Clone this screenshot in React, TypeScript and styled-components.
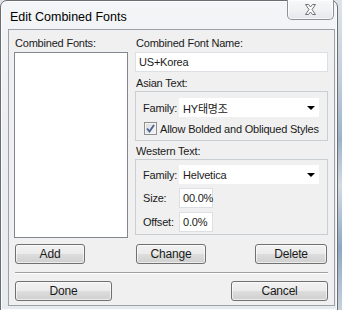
import React from "react";
import styled, { createGlobalStyle } from "styled-components";

const Global = createGlobalStyle`
  html, body { margin: 0; padding: 0; }
  body {
    width: 342px; height: 310px; overflow: hidden;
    background: linear-gradient(180deg, #dfe4ea 0%, #c3cfdb 25%, #9fb3c8 45%, #d3dbe3 60%, #8ea8c3 80%, #c8d2dc 100%);
    font-family: "Liberation Sans", Arial, sans-serif;
  }
`;

const Window = styled.div`
  position: relative;
  width: 338px;
  height: 311px;
  box-sizing: border-box;
  border: 1px solid #6a6e73;
  border-radius: 7px 7px 0 0;
  background: linear-gradient(180deg, #f3f5f7 0%, #eceef1 40%, #e7eaee 100%);
  box-shadow: inset 0 0 0 1px rgba(255,255,255,0.8);
  display: flex;
  flex-direction: column;
  padding-left: 7px;
`;

const TitleBar = styled.div`
  height: 28px;
  display: flex;
  align-items: center;
  padding-left: 2px;
  padding-top: 4px;
  box-sizing: border-box;
  font-size: 12.5px;
  color: #000;
`;

const CloseButton = styled.div`
  position: absolute;
  top: -1px;
  left: 286px;
  width: 47px;
  height: 20px;
  box-sizing: border-box;
  border: 1px solid #8d9196;
  border-top: none;
  border-radius: 0 0 5px 5px;
  background: linear-gradient(180deg, #f7f8f9 0%, #eef0f2 60%, #e4e7ea 100%);
  box-shadow: inset 0 0 0 1px rgba(255,255,255,0.7);
  display: flex;
  align-items: center;
  justify-content: center;
`;

const Client = styled.div`
  width: 327px;
  height: 277px;
  box-sizing: border-box;
  border: 1px solid #9da2a7;
  background: #f0f0f0;
  padding: 6px 5px 0 5px;
  display: flex;
  flex-direction: column;
  letter-spacing: -0.2px;
`;

const Columns = styled.div`
  display: grid;
  grid-template-columns: 114px 193px;
  column-gap: 7px;
`;

const Column = styled.div`
  display: flex;
  flex-direction: column;
`;

const Label = styled.div<{ $mt?: number }>`
  height: 15px;
  line-height: 15px;
  font-size: 11px;
  color: #1a1a1a;
  padding-left: 1px;
  margin-top: ${(p) => p.$mt ?? 0}px;
  white-space: nowrap;
`;

const ListBox = styled.div`
  margin-top: 1px;
  height: 186px;
  box-sizing: border-box;
  border: 1px solid #828790;
  background: #fff;
`;

const TextField = styled.div<{ $w?: number; $mt?: number }>`
  width: ${(p) => (p.$w ? `${p.$w}px` : "auto")};
  height: 20px;
  box-sizing: border-box;
  margin-top: ${(p) => p.$mt ?? 0}px;
  border: 1px solid #dcdfe3;
  background: #fff;
  font-size: 11px;
  line-height: 18px;
  padding-left: 3px;
  color: #1a1a1a;
  white-space: nowrap;
`;

const Group = styled.div<{ $h: number; $pt: number }>`
  height: ${(p) => p.$h}px;
  box-sizing: border-box;
  border: 1px solid #c9ced3;
  padding: ${(p) => p.$pt}px 8px 0 7px;
  display: flex;
  flex-direction: column;
  gap: 4px;
`;

const Row = styled.div`
  display: grid;
  grid-template-columns: 36px 1fr;
  align-items: center;
`;

const FieldLabel = styled.div`
  font-size: 11px;
  color: #1a1a1a;
`;

const Select = styled.div`
  height: 19px;
  box-sizing: border-box;
  background: #fff;
  display: flex;
  align-items: center;
  justify-content: space-between;
  padding: 0 4px 0 4px;
  font-size: 11px;
  color: #1a1a1a;
`;

const Korean = styled.span`
  font-family: "Liberation Sans", "Noto Sans CJK KR", sans-serif;
`;

const Arrow = styled.span`
  width: 0;
  height: 0;
  border-left: 4px solid transparent;
  border-right: 4px solid transparent;
  border-top: 4px solid #000;
`;

const CheckRow = styled.div`
  display: flex;
  align-items: center;
  gap: 3px;
  padding-left: 1px;
  margin-top: 1px;
  font-size: 11px;
  color: #1a1a1a;
  white-space: nowrap;
`;

const CheckBox = styled.span`
  width: 13px;
  height: 13px;
  box-sizing: border-box;
  border: 1px solid #8e8f8f;
  background: linear-gradient(135deg, #dcdcdc 0%, #f5f5f5 100%);
  box-shadow: inset 0 0 0 1px #f4f4f4;
  display: flex;
  align-items: center;
  justify-content: center;
`;

const ButtonRow = styled.div<{ $mt: number }>`
  display: flex;
  justify-content: space-between;
  margin-top: ${(p) => p.$mt}px;
  padding: 0 1px;
`;

const Button = styled.div<{ $w: number }>`
  width: ${(p) => p.$w}px;
  height: 20px;
  box-sizing: border-box;
  border: 1px solid #707070;
  border-radius: 3px;
  background: linear-gradient(180deg, #f2f2f2 0%, #ebebeb 48%, #dddddd 52%, #cfcfcf 100%);
  box-shadow: inset 0 0 0 1px rgba(255,255,255,0.6);
  font-size: 12px;
  display: flex;
  align-items: center;
  justify-content: center;
  color: #1a1a1a;
`;

const Separator = styled.div`
  margin: 8px 1px 0 1px;
  height: 1px;
  background: #a0a0a0;
  border-bottom: 1px solid #fff;
`;

export default function App() {
  return (
    <>
      <Global />
      <Window>
        <TitleBar>Edit Combined Fonts</TitleBar>
        <CloseButton>
          <svg width="13" height="11" viewBox="0 0 13 11">
            <path
              d="M1.5 0.5 H4.5 L6.5 3 L8.5 0.5 H11.5 L8 5.5 L11.5 10.5 H8.5 L6.5 8 L4.5 10.5 H1.5 L5 5.5 Z"
              fill="#fff"
              stroke="#6d7277"
              strokeWidth="1"
              strokeLinejoin="round"
            />
          </svg>
        </CloseButton>
        <Client>
          <Columns>
            <Column>
              <Label>Combined Fonts:</Label>
              <ListBox />
            </Column>
            <Column>
              <Label>Combined Font Name:</Label>
              <TextField $mt={1}>US+Korea</TextField>
              <Label $mt={4}>Asian Text:</Label>
              <Group $h={50} $pt={6}>
                <Row>
                  <FieldLabel>Family:</FieldLabel>
                  <Select>
                    <Korean>HY태명조</Korean>
                    <Arrow />
                  </Select>
                </Row>
                <CheckRow>
                  <CheckBox>
                    <svg width="9" height="9" viewBox="0 0 9 9">
                      <path d="M1 4.5 L3.5 7.5 L8 1" fill="none" stroke="#4a5f97" strokeWidth="1.8" />
                    </svg>
                  </CheckBox>
                  Allow Bolded and Obliqued Styles
                </CheckRow>
              </Group>
              <Label $mt={3}>Western Text:</Label>
              <Group $h={76} $pt={5}>
                <Row>
                  <FieldLabel>Family:</FieldLabel>
                  <Select>
                    Helvetica
                    <Arrow />
                  </Select>
                </Row>
                <Row>
                  <FieldLabel>Size:</FieldLabel>
                  <TextField $w={34}>00.0%</TextField>
                </Row>
                <Row>
                  <FieldLabel>Offset:</FieldLabel>
                  <TextField $w={34}>0.0%</TextField>
                </Row>
              </Group>
            </Column>
          </Columns>
          <Columns>
            <ButtonRow $mt={6}>
              <Button $w={70}>Add</Button>
            </ButtonRow>
            <ButtonRow $mt={6}>
              <Button $w={70}>Change</Button>
              <Button $w={72}>Delete</Button>
            </ButtonRow>
          </Columns>
          <Separator />
          <ButtonRow $mt={7}>
            <Button $w={97}>Done</Button>
            <Button $w={97}>Cancel</Button>
          </ButtonRow>
        </Client>
      </Window>
    </>
  );
}
